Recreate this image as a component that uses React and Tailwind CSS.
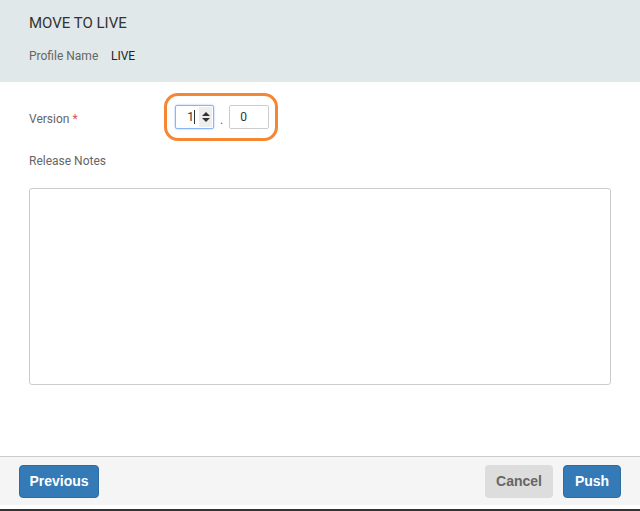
import { useState } from 'react'

export default function App(){
const [major, setMajor] = useState('1')
const [minor, setMinor] = useState('0')

return (
<div className="w-[640px] h-[511px] bg-white flex flex-col font-['Roboto',sans-serif] overflow-hidden">
<div className="h-[82px] bg-[#e0e8e9] px-[29px] pt-[14px] shrink-0">
<h1 className="text-[15px] leading-[18px] text-[#333] font-normal">MOVE TO LIVE</h1>
<div className="mt-[16px] flex text-[12px] leading-[16px]">
<span className="text-[#666] w-[82px]">Profile Name</span>
<span className="text-[#222]">LIVE</span>
</div>
</div>

<div className="flex-1 px-[29px] pt-[11px]">
<div className="flex items-center">
<label className="text-[12px] text-[#666] w-[135px] mt-[4px]">Version <span className="text-[#d9534f]">*</span></label>
<div className="border-[3px] border-[#f58634] rounded-[14px] w-[114px] h-[48px] flex items-center pl-[8px]">
<div className="w-[39px] h-[24px] border border-[#8ab4f8] rounded-[2px] flex items-center justify-end shadow-[0_0_2px_#8ab4f8]">
<input value={major} onChange={e=>setMajor(e.target.value)} className="w-[18px] text-right text-[12px] text-[#333] outline-none bg-transparent" />
<span className="w-px h-[14px] bg-[#333] mr-[4px]"></span>
<span className="w-[13px] h-[20px] bg-[#eee] flex items-center justify-center mr-[1px]">
<svg width="8" height="12" viewBox="0 0 8 12"><path d="M0 5 L4 1 L8 5 Z M0 7 L4 11 L8 7 Z" fill="#333"/></svg>
</span>
</div>
<span className="mx-[6px] text-[12px] text-[#666] mt-[6px]">.</span>
<input value={minor} onChange={e=>setMinor(e.target.value)} className="w-[40px] h-[24px] border border-[#ccc] rounded-[2px] text-[12px] text-[#333] pl-[10px] outline-none" />
</div>
</div>

<div className="mt-[11px] text-[12px] text-[#666]">Release Notes</div>
<textarea className="mt-[18px] w-[582px] h-[197px] border border-[#ccc] rounded-[3px] resize-none outline-none block"></textarea>
</div>

<div className="h-[49px] border-t border-[#ccc] bg-[#f5f5f5] flex items-center justify-between px-[19px] shrink-0 font-['Liberation_Sans',sans-serif]">
<button className="w-[80px] h-[33px] bg-[#337ab7] border border-[#2e6da4] rounded-[4px] text-white font-bold text-[14px]">Previous</button>
<div className="flex gap-[10px]">
<button className="w-[68px] h-[33px] bg-[#ddd] rounded-[4px] text-[#666] font-bold text-[14px]">Cancel</button>
<button className="w-[58px] h-[33px] bg-[#337ab7] border border-[#2e6da4] rounded-[4px] text-white font-bold text-[14px]">Push</button>
</div>
</div>
<div className="h-[4px] bg-white shrink-0"></div>
<div className="h-[2px] bg-[#333] shrink-0"></div>
</div>
)
}
